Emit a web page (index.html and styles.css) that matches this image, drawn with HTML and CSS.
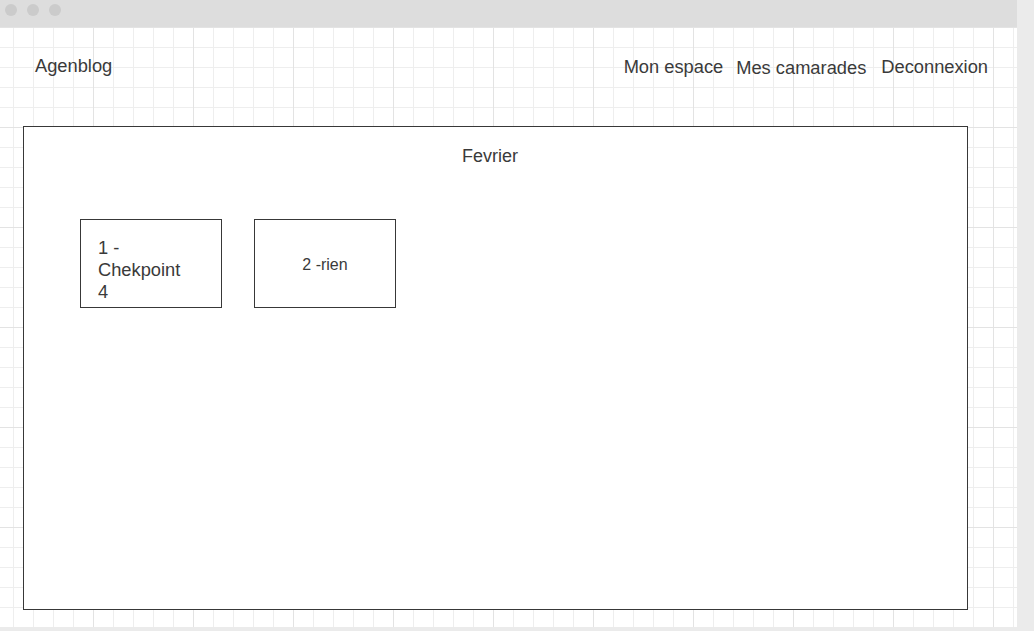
FILE: index.html
```html
<!DOCTYPE html>
<html lang="fr">
<head>
<meta charset="utf-8">
<title>Agenblog</title>
<link rel="stylesheet" href="styles.css">
</head>
<body>
<div class="window">
  <div class="titlebar">
    <span class="dot"></span>
    <span class="dot"></span>
    <span class="dot"></span>
  </div>
  <div class="canvas">
    <header class="header">
      <div class="brand">Agenblog</div>
      <nav class="nav">
        <a class="nav-item nav-mon">Mon espace</a>
        <a class="nav-item nav-mes">Mes camarades</a>
        <a class="nav-item nav-dec">Deconnexion</a>
      </nav>
    </header>
    <main class="month">
      <h1 class="month-title">Fevrier</h1>
      <div class="cards">
        <div class="card card-left">1 - Chekpoint 4</div>
        <div class="card card-center">2 -rien</div>
      </div>
    </main>
  </div>
</div>
</body>
</html>
```

FILE: styles.css
```css
* {
  box-sizing: border-box;
}

html, body {
  margin: 0;
  padding: 0;
}

body {
  background: #ebebeb;
  font-family: "Liberation Sans", Arial, sans-serif;
  color: #3a3a3a;
  width: 1034px;
  height: 631px;
  overflow: hidden;
}

.window {
  width: 1017px;
  height: 627px;
  display: flex;
  flex-direction: column;
}

.titlebar {
  height: 27px;
  background: #dddddd;
  display: flex;
  gap: 10px;
  padding: 4px 0 0 5px;
}

.dot {
  width: 12px;
  height: 12px;
  border-radius: 50%;
  background: #cbcbcb;
}

.canvas {
  flex: 1;
  background-color: #ffffff;
  background-image:
    linear-gradient(to right, #e3e3e3 1px, transparent 1px),
    linear-gradient(to bottom, #e3e3e3 1px, transparent 1px),
    linear-gradient(to right, #eeeeee 1px, transparent 1px),
    linear-gradient(to bottom, #eeeeee 1px, transparent 1px);
  background-size: 100px 100px, 100px 100px, 20px 20px, 20px 20px;
  background-position: 93px 0, 0 0, 13px 0, 0 0;
  display: flex;
  flex-direction: column;
}

.header {
  height: 99px;
  display: flex;
  justify-content: space-between;
  align-items: flex-start;
  padding: 29px 29px 0 35px;
  font-size: 18.3px;
  line-height: 20px;
}

.nav {
  display: flex;
  align-items: flex-start;
  gap: 13px;
}

.nav-item {
  color: #3a3a3a;
  text-decoration: none;
}

.nav-mon {
  margin-top: 1px;
}

.nav-mes {
  margin-top: 2px;
}

.nav-dec {
  margin-top: 1px;
  margin-left: 2px;
}

.month {
  margin-left: 23px;
  width: 945px;
  height: 484px;
  border: 1px solid #383838;
  background: #ffffff;
  display: flex;
  flex-direction: column;
}

.month-title {
  margin: 0;
  padding: 19px 11px 0 0;
  font-size: 18px;
  font-weight: normal;
  line-height: 20px;
  text-align: center;
}

.cards {
  display: flex;
  gap: 32px;
  margin: 53px 0 0 56px;
}

.card {
  width: 142px;
  height: 89px;
  border: 1px solid #383838;
  background: #ffffff;
}

.card-left {
  padding: 17px 33px 0 17px;
  font-size: 18.3px;
  line-height: 22px;
}

.card-center {
  display: flex;
  align-items: center;
  justify-content: center;
  padding-top: 2px;
  font-size: 16px;
  line-height: 18px;
}
```
